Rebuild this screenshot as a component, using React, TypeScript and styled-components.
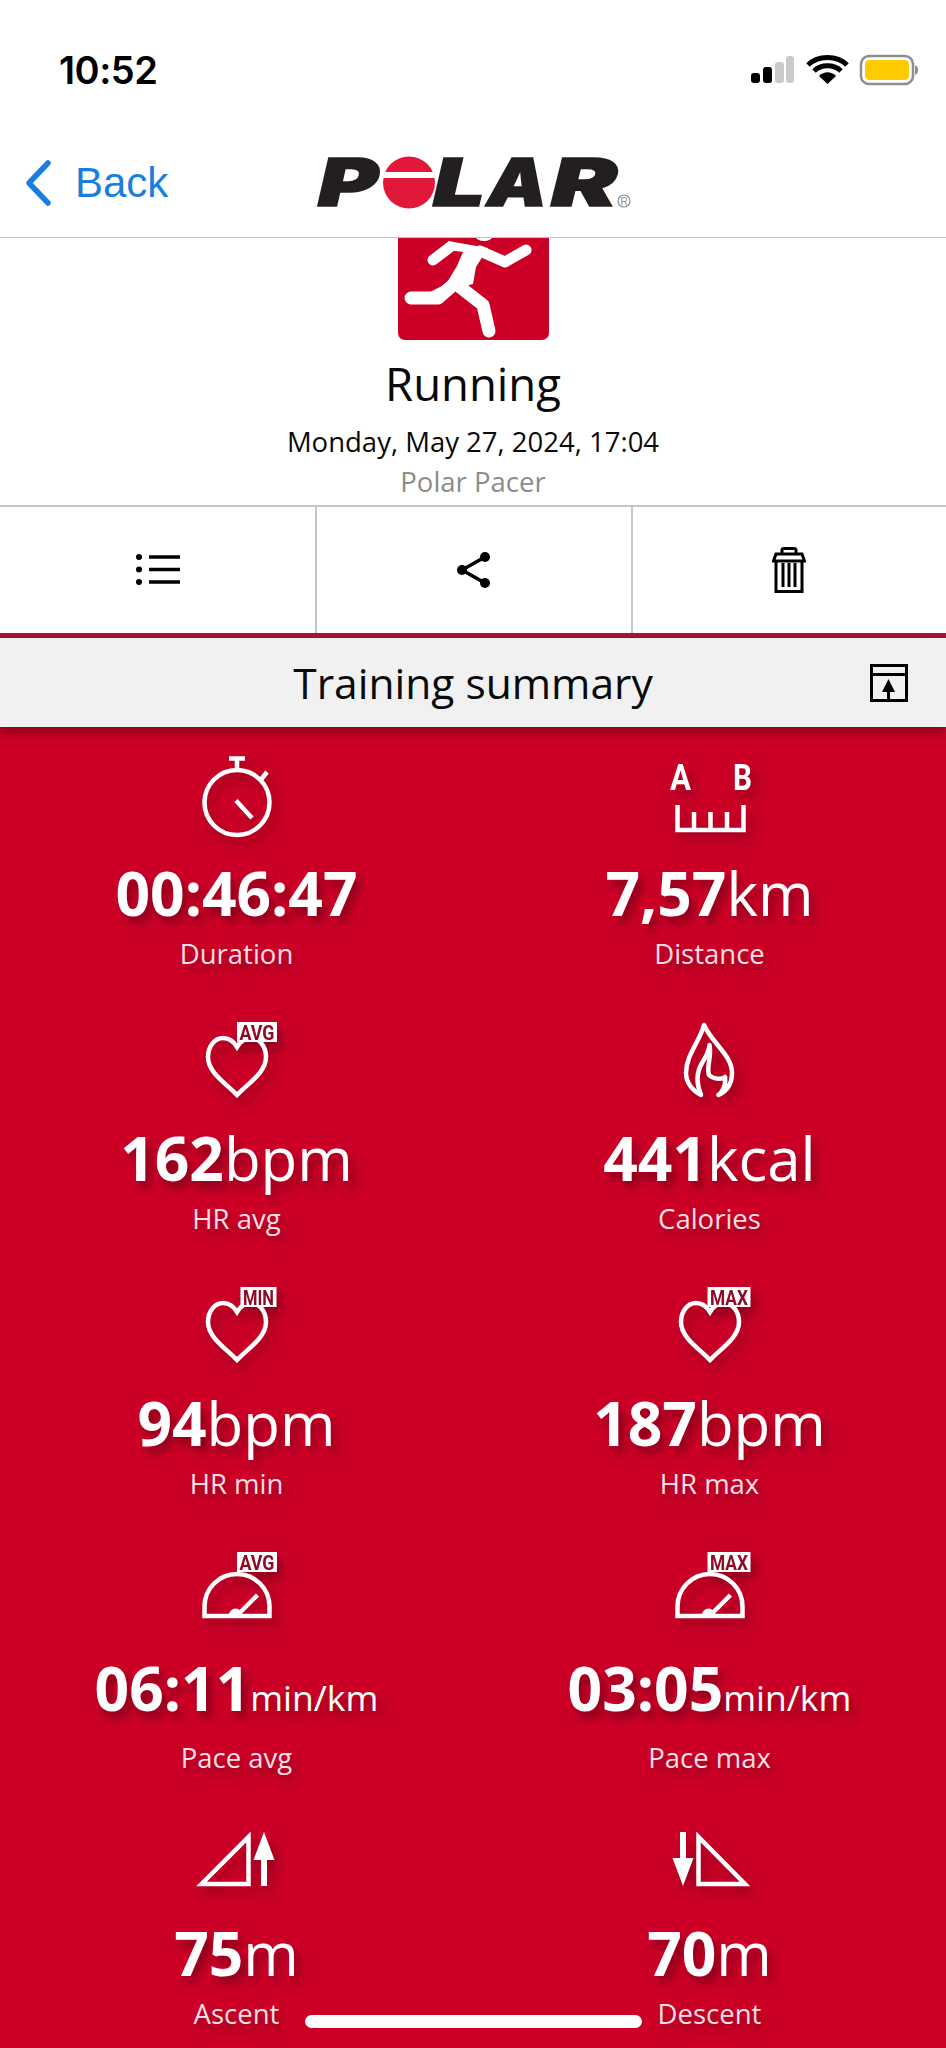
import React from "react";
import styled, { createGlobalStyle } from "styled-components";

const GlobalStyle = createGlobalStyle`
  html, body {
    margin: 0;
    padding: 0;
    background: #fff;
  }
  body {
    font-family: "Open Sans", "Liberation Sans", sans-serif;
  }
`;

const RED = "#cc0027";

const Screen = styled.div`
  position: relative;
  display: flex;
  flex-direction: column;
  width: 946px;
  height: 2048px;
  overflow: hidden;
  > * {
    flex-shrink: 0;
  }
`;

const StatusBar = styled.div`
  display: flex;
  justify-content: space-between;
  align-items: center;
  box-sizing: border-box;
  height: 116px;
  padding: 48px 28px 24px 59px;
`;

const Time = styled.div`
  font-family: Inter, "Liberation Sans", sans-serif;
  font-size: 38px;
  font-weight: 600;
  letter-spacing: -0.5px;
  color: #000;
`;

const NavBar = styled.div`
  display: grid;
  grid-template-columns: 1fr auto 1fr;
  align-items: center;
  box-sizing: border-box;
  height: 122px;
  padding-top: 12px;
  border-bottom: 1px solid #c6c6c6;
`;

const BackLink = styled.div`
  display: flex;
  align-items: center;
  gap: 23px;
  padding-left: 24px;
  font-family: "Liberation Sans", Arial, sans-serif;
  font-size: 42px;
  color: #1a7fdc;
`;

const Header = styled.div`
  display: flex;
  flex-direction: column;
  align-items: center;
  height: 267px;
`;

const Tile = styled.div`
  width: 151px;
  height: 102px;
  overflow: hidden;
  border-radius: 0 0 7px 7px;
  background: ${RED};
`;

const Sport = styled.div`
  margin-top: 11px;
  font-size: 45.5px;
  line-height: 64px;
  color: #0a0a0a;
`;

const DateLine = styled.div`
  margin-top: 7px;
  font-size: 27.5px;
  line-height: 40px;
  color: #0a0a0a;
`;

const Device = styled.div`
  font-size: 27.5px;
  line-height: 40px;
  color: #8c8c8c;
`;

const Actions = styled.div`
  display: grid;
  grid-template-columns: repeat(3, 1fr);
  height: 126px;
  border-top: 2px solid #c6c6c6;
  border-bottom: 5px solid #ab1430;
`;

const Action = styled.div`
  display: flex;
  align-items: center;
  justify-content: center;
  & + & {
    border-left: 2px solid #c6c6c6;
  }
`;

const TitleBar = styled.div`
  position: relative;
  z-index: 1;
  display: grid;
  grid-template-columns: 1fr auto 1fr;
  align-items: center;
  height: 89px;
  background: #f1f1f2;
  box-shadow: 0 5px 10px rgba(80, 0, 15, 0.55);
`;

const Title = styled.div`
  grid-column: 2;
  font-size: 42.5px;
  color: #0a0a0a;
`;

const ExportButton = styled.div`
  display: flex;
  justify-content: flex-end;
  padding-right: 38px;
`;

const Summary = styled.div`
  flex: 1;
  display: grid;
  grid-template-columns: 1fr 1fr;
  grid-auto-rows: 265px;
  padding-top: 23px;
  background: ${RED};
`;

const Cell = styled.div`
  display: flex;
  flex-direction: column;
  align-items: center;
  color: #fff;
`;

const IconSvg = styled.svg`
  display: block;
  width: 120px;
  height: 90px;
  overflow: visible;
  filter: drop-shadow(5px 7px 6px rgba(70, 0, 15, 0.45));
`;

const Value = styled.div`
  margin-top: 13px;
  font-size: 60.5px;
  line-height: 80px;
  font-weight: 700;
  white-space: nowrap;
  text-shadow: 5px 7px 9px rgba(70, 0, 15, 0.5);
`;

const Unit = styled.span<{ $small?: boolean }>`
  font-weight: 400;
  font-size: ${(p) => (p.$small ? "35.5px" : "60px")};
`;

const Label = styled.div`
  margin-top: 3px;
  font-size: 27.5px;
  line-height: 36px;
  color: #fbdfe4;
  text-shadow: 4px 6px 8px rgba(70, 0, 15, 0.45);
`;

const HomeBar = styled.div`
  position: absolute;
  left: 305px;
  bottom: 20px;
  width: 337px;
  height: 13px;
  border-radius: 7px;
  background: #fff;
`;

const Line = styled.path`
  fill: none;
  stroke: #fff;
  stroke-width: 4.5;
`;

const BadgeText = styled.text`
  font-family: "Roboto", "Liberation Sans", sans-serif;
  font-size: 20px;
  font-weight: 700;
  fill: #8e0a25;
`;

const RouteLetter = styled.text`
  font-family: "Roboto", "Liberation Sans", sans-serif;
  font-size: 36px;
  font-weight: 700;
  fill: #fff;
`;

const LogoSvg = styled.svg`
  display: block;
  overflow: visible;
`;

const LogoLetter = styled.text`
  font-family: Inter, "Liberation Sans", sans-serif;
  font-size: 66px;
  font-weight: 900;
  font-style: italic;
  fill: #231f20;
  stroke: #231f20;
  stroke-width: 1.5;
`;

const LogoMark = styled.text`
  font-family: "Liberation Sans", Arial, sans-serif;
  font-size: 10px;
  fill: #8f8f8f;
`;

const Badge = ({ label, x, w }: { label: string; x: number; w: number }) => (
  <>
    <rect x={x} y={7} width={w} height={20} fill="#fff" />
    <BadgeText x={x + 2.5} y={24.5} textLength={w - 5} lengthAdjust="spacingAndGlyphs">
      {label}
    </BadgeText>
  </>
);

const Stopwatch = () => (
  <IconSvg viewBox="0 0 120 90">
    <circle cx="60" cy="52.5" r="32.5" fill="none" stroke="#fff" strokeWidth="4.5" />
    <Line d="M52 8.5H68M60 8.5V20M83 31L90 22M59 50.5L75 68" />
  </IconSvg>
);

const RouteIcon = () => (
  <IconSvg viewBox="0 0 120 90">
    <RouteLetter x="20" y="40" textLength="21" lengthAdjust="spacingAndGlyphs">A</RouteLetter>
    <RouteLetter x="83" y="40" textLength="19" lengthAdjust="spacingAndGlyphs">B</RouteLetter>
    <Line d="M27.5 55V80H93.5V55M44 62V80M60.5 62V80M77 62V80" />
  </IconSvg>
);

const HeartIcon = ({ label, x, w }: { label: string; x: number; w: number }) => (
  <IconSvg viewBox="0 0 120 90">
    <Line d="M60 80C50 69 31 58 31 42C31 31 38 23 46 23C53 23 57 27 60 32C63 27 67 23 74 23C82 23 89 31 89 42C89 58 70 69 60 80Z" />
    <Badge label={label} x={x} w={w} />
  </IconSvg>
);

const FlameIcon = () => (
  <IconSvg viewBox="0 0 120 90">
    <Line
      strokeLinejoin="round"
      d="M54 10C50 26 36 40 36 58C36 68 43 76 51 80C46 68 46 58 52 48C56 42 59 36 59.5 30C62 42 56 52 59 60C63 64 71 65 75 62C76 70 73 76 68.5 80C77 76 82 68 82 58C82 40 62 28 54 10Z"
    />
  </IconSvg>
);

const GaugeIcon = ({ label, x, w }: { label: string; x: number; w: number }) => (
  <IconSvg viewBox="0 0 120 90">
    <Line d="M27.5 71V61.5A32.5 32.5 0 0 1 92.5 61.5V71Z" />
    <Line d="M62.5 68L80.5 50" />
    <path d="M52 70A6.5 6.5 0 0 1 65 70Z" fill="#fff" />
    <Badge label={label} x={x} w={w} />
  </IconSvg>
);

const AscentIcon = () => (
  <IconSvg viewBox="0 0 120 90">
    <Line d="M24.5 74L71.5 27V74Z" />
    <path d="M87 22L97.5 50H90V76H84V50H76.5Z" fill="#fff" />
  </IconSvg>
);

const DescentIcon = () => (
  <IconSvg viewBox="0 0 120 90">
    <Line d="M95 74L48.5 27V74Z" />
    <path d="M33 76L22.5 48H30V22H36V48H43.5Z" fill="#fff" />
  </IconSvg>
);

const stats = [
  { icon: <Stopwatch />, value: "00:46:47", unit: "", label: "Duration" },
  { icon: <RouteIcon />, value: "7,57", unit: "km", label: "Distance" },
  { icon: <HeartIcon label="AVG" x={60} w={40} />, value: "162", unit: "bpm", label: "HR avg" },
  { icon: <FlameIcon />, value: "441", unit: "kcal", label: "Calories" },
  { icon: <HeartIcon label="MIN" x={63.5} w={36} />, value: "94", unit: "bpm", label: "HR min" },
  { icon: <HeartIcon label="MAX" x={57.5} w={43} />, value: "187", unit: "bpm", label: "HR max" },
  { icon: <GaugeIcon label="AVG" x={60} w={40} />, value: "06:11", unit: "min/km", small: true, label: "Pace avg" },
  { icon: <GaugeIcon label="MAX" x={57.5} w={43} />, value: "03:05", unit: "min/km", small: true, label: "Pace max" },
  { icon: <AscentIcon />, value: "75", unit: "m", label: "Ascent" },
  { icon: <DescentIcon />, value: "70", unit: "m", label: "Descent" },
];

const StatusIcons = () => (
  <svg width="168" height="32" viewBox="0 0 168 32">
    <rect x="1" y="19" width="9" height="10" rx="3" fill="#000" />
    <rect x="13" y="13" width="9" height="16" rx="3" fill="#000" />
    <rect x="25" y="8" width="9" height="21" rx="3" fill="#cacaca" />
    <rect x="36" y="2" width="8" height="27" rx="3" fill="#cacaca" />
    <path d="M58 11C68 1 87 1 97 11M64 17C71 10 84 10 91 17" fill="none" stroke="#000" strokeWidth="5" />
    <path d="M69 22C74 17 81 17 86 22L77.5 30Z" fill="#000" />
    <rect x="111" y="2" width="52" height="28" rx="8" fill="none" stroke="#8e8e8e" strokeWidth="2.5" />
    <rect x="115" y="6" width="44" height="20" rx="4.5" fill="#fdcb00" />
    <path d="M165 11C167.5 12 168 14 168 16C168 18 167.5 20 165 21Z" fill="#8e8e8e" />
  </svg>
);

const PolarLogo = () => (
  <LogoSvg width="316" height="52" viewBox="0 0 316 52">
    <LogoLetter x="3" y="49" textLength="60" lengthAdjust="spacingAndGlyphs">P</LogoLetter>
    <circle cx="94" cy="25.5" r="26" fill="#e2183a" />
    <rect x="66" y="15" width="56" height="6" fill="#fff" />
    <LogoLetter x="118" y="49" textLength="52" lengthAdjust="spacingAndGlyphs">L</LogoLetter>
    <LogoLetter x="172" y="49" textLength="60" lengthAdjust="spacingAndGlyphs">A</LogoLetter>
    <LogoLetter x="236" y="49" textLength="66" lengthAdjust="spacingAndGlyphs">R</LogoLetter>
    <circle cx="309" cy="44" r="6" fill="none" stroke="#8f8f8f" strokeWidth="1.2" />
    <LogoMark x="305.5" y="48">R</LogoMark>
  </LogoSvg>
);

const RunnerIcon = () => (
  <svg width="151" height="102" viewBox="0 0 151 102">
    <path d="M50 3L90 10L78 29L75 46L54 52L44 65L32 54L48 46L59 28L65 14L50 12Z" fill="#fff" />
    <g fill="none" stroke="#fff" strokeLinecap="round" strokeLinejoin="round">
      <path d="M35 22L52 9" strokeWidth="11" />
      <path d="M82 13L107 24L128 12" strokeWidth="11" />
      <path d="M13 60H40L55 47" strokeWidth="13" />
      <path d="M62 49L85 67L91 93" strokeWidth="13" />
    </g>
    <ellipse cx="86" cy="-1" rx="8" ry="4" fill="#fff" />
  </svg>
);

const ListIcon = () => (
  <svg width="44" height="32" viewBox="0 0 44 32">
    <path d="M13 3H44M13 15.5H44M13 28H44" stroke="#000" strokeWidth="3.5" />
    <circle cx="3" cy="3" r="3" />
    <circle cx="3" cy="15.5" r="3" />
    <circle cx="3" cy="28" r="3" />
  </svg>
);

const ShareIcon = () => (
  <svg width="34" height="36" viewBox="0 0 34 36">
    <path d="M28 5L5 18L28 31" fill="none" stroke="#000" strokeWidth="3.5" />
    <circle cx="28" cy="5" r="5" />
    <circle cx="5" cy="18" r="5" />
    <circle cx="28" cy="31" r="5" />
  </svg>
);

const TrashIcon = () => (
  <svg width="34" height="46" viewBox="0 0 34 46" fill="none" stroke="#000" strokeWidth="3">
    <path d="M10 7V3C10 1.8 11 1.5 12 1.5H22C23 1.5 24 1.8 24 3V7" />
    <path d="M1.5 14L4 7H30L32.5 14Z" />
    <path d="M4 14V44.5H30V14" />
    <path d="M11 16V40M17 16V40M23 16V40" />
  </svg>
);

const ExportIcon = () => (
  <svg width="38" height="38" viewBox="0 0 38 38">
    <rect x="1.5" y="1.5" width="35" height="35" fill="none" stroke="#000" strokeWidth="3" />
    <path d="M1.5 10.5H36.5" stroke="#000" strokeWidth="3" />
    <path d="M18.5 15L25 28H20V36H17V28H12Z" />
  </svg>
);

const BackChevron = () => (
  <svg width="28" height="48" viewBox="0 0 28 48">
    <path d="M24 4L5 24L24 44" fill="none" stroke="#1a7fdc" strokeWidth="5.5" strokeLinecap="round" strokeLinejoin="round" />
  </svg>
);

export default function App() {
  return (
    <Screen>
      <GlobalStyle />
      <StatusBar>
        <Time>10:52</Time>
        <StatusIcons />
      </StatusBar>
      <NavBar>
        <BackLink>
          <BackChevron />
          Back
        </BackLink>
        <PolarLogo />
      </NavBar>
      <Header>
        <Tile>
          <RunnerIcon />
        </Tile>
        <Sport>Running</Sport>
        <DateLine>Monday, May 27, 2024, 17:04</DateLine>
        <Device>Polar Pacer</Device>
      </Header>
      <Actions>
        <Action><ListIcon /></Action>
        <Action><ShareIcon /></Action>
        <Action><TrashIcon /></Action>
      </Actions>
      <TitleBar>
        <Title>Training summary</Title>
        <ExportButton><ExportIcon /></ExportButton>
      </TitleBar>
      <Summary>
        {stats.map((s) => (
          <Cell key={s.label}>
            {s.icon}
            <Value>
              {s.value}
              {s.unit && <Unit $small={s.small}>{s.unit}</Unit>}
            </Value>
            <Label>{s.label}</Label>
          </Cell>
        ))}
      </Summary>
      <HomeBar />
    </Screen>
  );
}
